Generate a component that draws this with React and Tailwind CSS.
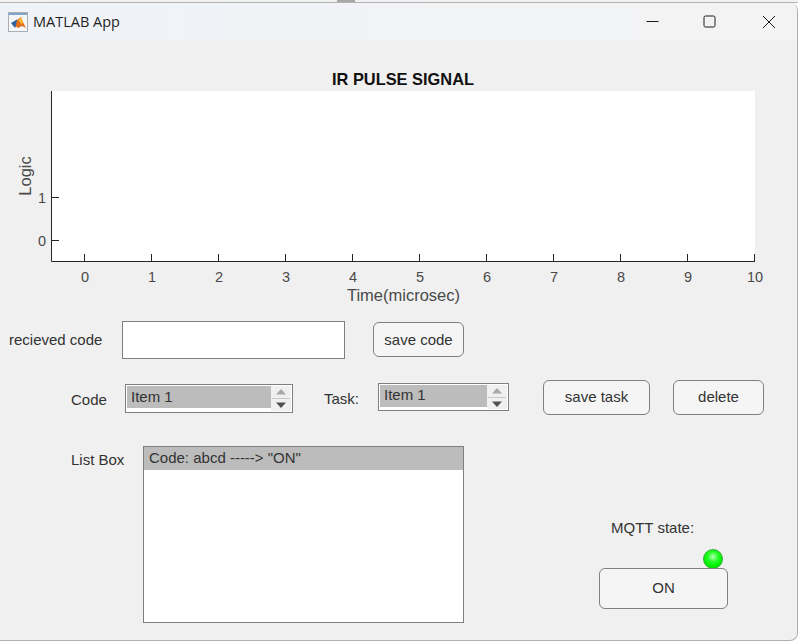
const font = { fontFamily: '"Liberation Sans", Arial, sans-serif' };
const xTicks = [0, 1, 2, 3, 4, 5, 6, 7, 8, 9, 10];

function MatlabIcon() {
  return (
    <svg width="20" height="20" viewBox="0 0 20 20" className="shrink-0">
      <rect x="0.5" y="0.5" width="19" height="19" fill="#f4f6f8" stroke="#a9aeb4" />
      <rect x="1" y="1" width="18" height="2" fill="#7fa6c8" />
      <path d="M3 11 L9 7.5 L10 10 L7 16 Z" fill="#2f5f9e" />
      <path d="M9 8 L13 5 L15 10 L18 16 L14 14 L10 16 L7.5 14 Z" fill="#e0701c" />
      <path d="M13 5 L15 10 L13.5 12.5 L10.5 8 Z" fill="#f7b733" />
    </svg>
  );
}

function Plot() {
  return (
    <svg width="798" height="268" viewBox="0 0 798 268" className="block shrink-0">
      <rect x="52" y="0" width="703" height="170" fill="#fff" />
      <path d="M51.5 0 V170.5 H755" fill="none" stroke="#262626" />
      {xTicks.map((t) => (
        <path key={t} d={`M${84.5 + t * 67} 170 v-7`} stroke="#262626" />
      ))}
      <path d="M52 106.5 h7 M52 149.5 h7" stroke="#262626" />
      {xTicks.map((t) => (
        <text key={t} x={85 + t * 67} y="191" fontSize="14.5" textAnchor="middle" fill="#4a4a4a" style={font}>{t}</text>
      ))}
      <text x="46" y="112" fontSize="14.5" textAnchor="end" fill="#4a4a4a" style={font}>1</text>
      <text x="46" y="155" fontSize="14.5" textAnchor="end" fill="#4a4a4a" style={font}>0</text>
      <text x="403.5" y="210" fontSize="16.5" textAnchor="middle" fill="#4a4a4a" style={font}>Time(microsec)</text>
      <text transform="translate(31 85) rotate(-90)" fontSize="16.5" textAnchor="middle" fill="#4a4a4a" style={font}>Logic</text>
    </svg>
  );
}

function Spinner({ width, height, barHeight, lineHeight }) {
  return (
    <div className="flex border border-[#7f7f7f] bg-white p-px shrink-0" style={{ width, height }}>
      <div className="flex-1 flex flex-col">
        <div className="bg-[#bcbcbc] text-[15px] text-[#333] pl-[4px]" style={{ height: barHeight, lineHeight }}>Item 1</div>
      </div>
      <div className="w-[20px] bg-[#f0f0f0] flex flex-col items-center justify-center gap-[3px]">
        <svg width="14" height="6" viewBox="0 0 14 6"><path d="M7 0 L12 5.5 H2 Z" fill="#a8a8a8" /></svg>
        <div className="w-[18px] h-px bg-[#c8c8c8]" />
        <svg width="14" height="6" viewBox="0 0 14 6"><path d="M2 0.5 H12 L7 6 Z" fill="#505050" /></svg>
      </div>
    </div>
  );
}

function Btn({ children, className }) {
  return (
    <button className={`shrink-0 rounded-[6px] border border-[#808080] bg-[#f5f5f5] text-[15px] text-[#333] ${className}`}>
      {children}
    </button>
  );
}

export default function App() {
  return (
    <div className="w-[798px] h-[641px] overflow-hidden flex flex-col bg-white" style={font}>
      <div className="h-[3px] shrink-0 flex bg-[#f2f2f2] border-b border-[#b4b4b4]">
        <div className="w-[337px]" />
        <div className="w-[18px] bg-[#a8a8a8]" />
      </div>
      <div className="flex-1 flex flex-col bg-[#f0f0f0] rounded-tr-[8px] rounded-br-[8px] border-r border-b border-[#b0b0b0] overflow-hidden">
        <div className="h-[37px] shrink-0 flex items-center pl-[8px] bg-gradient-to-r from-[#eff3f8] to-[#f3f3f3]" style={{ fontFamily: '"Open Sans", "Noto Sans", sans-serif' }}>
          <MatlabIcon />
          <span className="ml-[5px] text-[14.5px] text-[#1f1f1f]">MATLAB App</span>
          <div className="ml-auto flex items-center text-[#1a1a1a]">
            <div className="w-[58px] flex justify-center">
              <svg width="13" height="13" viewBox="0 0 13 13"><path d="M0.5 6.5 H12.5" stroke="currentColor" /></svg>
            </div>
            <div className="w-[59px] flex justify-center">
              <svg width="13" height="13" viewBox="0 0 13 13" className="ml-[-2px]"><rect x="1" y="1" width="11" height="11" rx="1.5" fill="none" stroke="currentColor" /></svg>
            </div>
            <div className="w-[57px] flex justify-center">
              <svg width="14" height="14" viewBox="0 0 14 14"><path d="M1 1 L13 13 M13 1 L1 13" stroke="currentColor" /></svg>
            </div>
          </div>
        </div>

        <div className="h-[51px] shrink-0 flex items-end justify-center pb-[3px]">
          <span className="text-[16.4px] leading-[18px] font-bold text-[#111] ml-[9px]">IR PULSE SIGNAL</span>
        </div>
        <Plot />

        <div className="h-[38px] mt-[-38px] shrink-0 flex items-center text-[15px] text-[#333] pl-[9px]">
          <span className="w-[113px]">recieved code</span>
          <div className="w-[223px] h-[38px] border border-[#7f7f7f] bg-white shrink-0" />
          <Btn className="ml-[28px] w-[91px] h-[35px] mt-[-1px] pt-[2px]">save code</Btn>
        </div>

        <div className="mt-[21px] h-[35px] shrink-0 flex items-start text-[15px] text-[#333] pl-[71px]">
          <span className="w-[54px] mt-[9px]">Code</span>
          <div className="mt-[4px]"><Spinner width={168} height={29} barHeight={22} lineHeight="22px" /></div>
          <span className="ml-[31px] w-[54px] mt-[8px]">Task:</span>
          <div className="mt-[3px]"><Spinner width={131} height={28} barHeight={22} lineHeight="20px" /></div>
          <Btn className="ml-[34px] w-[107px] h-[35px]">save task</Btn>
          <Btn className="ml-[23px] w-[91px] h-[35px]">delete</Btn>
        </div>

        <div className="mt-[31px] flex items-start text-[15px] text-[#333] pl-[71px]">
          <span className="w-[72px] mt-[3px]">List Box</span>
          <div className="w-[321px] h-[177px] border border-[#7f7f7f] bg-white shrink-0">
            <div className="h-[23px] bg-[#bcbcbc] pl-[5px] leading-[22px]">Code: abcd -----&gt; "ON"</div>
          </div>
          <div className="ml-[135px] w-[129px] flex flex-col items-stretch">
            <span className="mt-[73px] ml-[12px] h-[18px] leading-[18px]">MQTT state:</span>
            <div className="mt-[12px] ml-[104px] w-[20px] h-[20px] rounded-full border border-[#30b030] bg-[radial-gradient(circle_at_50%_38%,#b8ffb8_0%,#28ff28_35%,#00f000_65%,#00cc00_100%)]" />
            <Btn className="mt-[-1px] h-[41px] text-[#111]">ON</Btn>
          </div>
        </div>
      </div>
    </div>
  );
}
